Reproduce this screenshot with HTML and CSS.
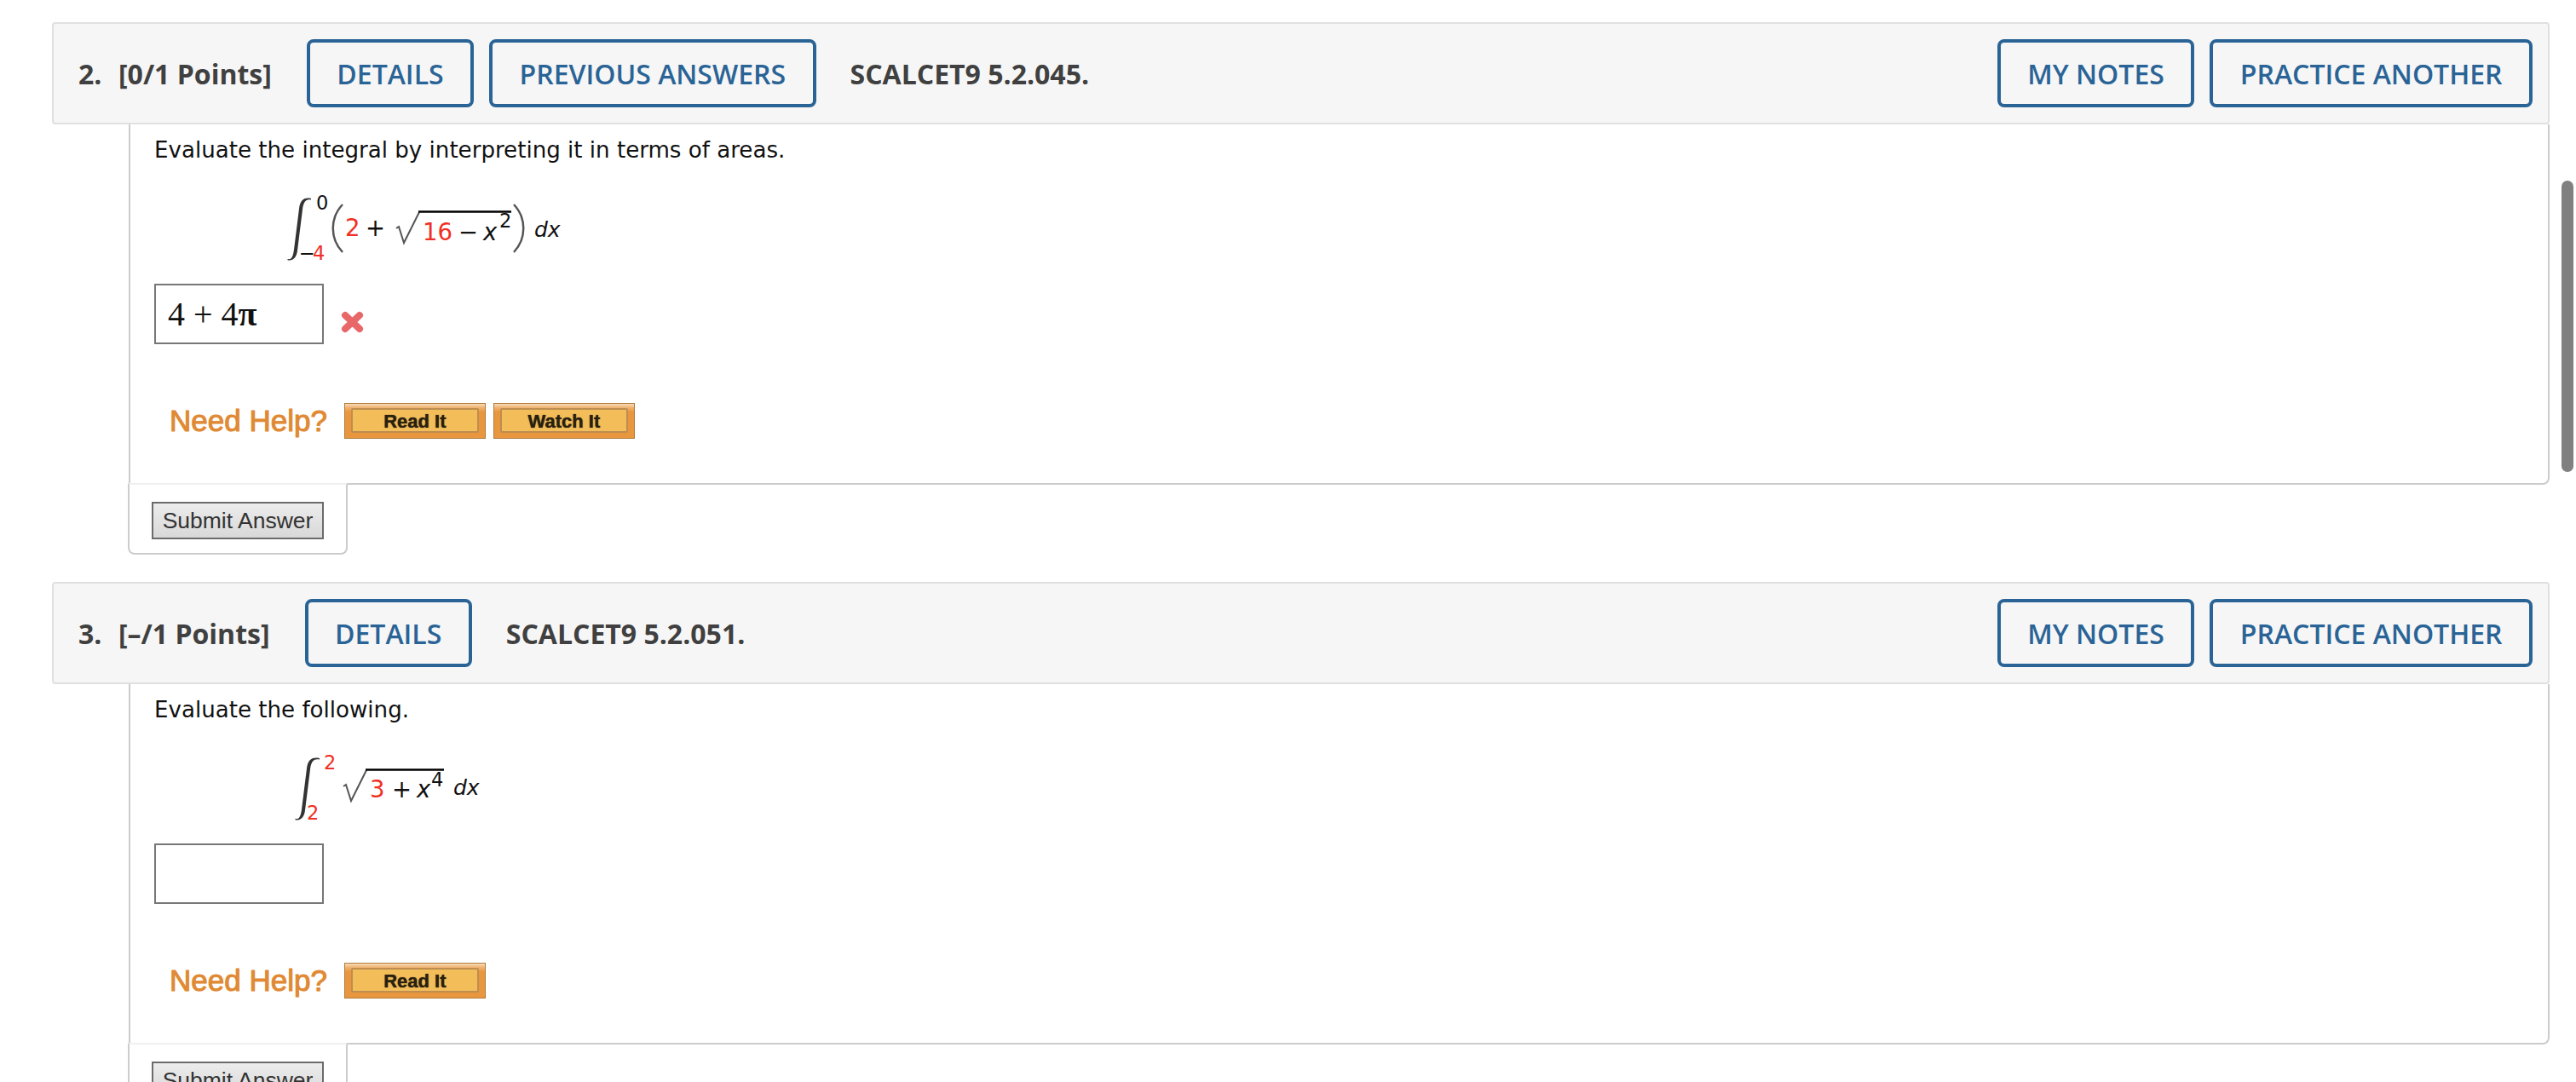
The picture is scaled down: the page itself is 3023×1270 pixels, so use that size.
FILE: index.html
```html
<!DOCTYPE html>
<html lang="en">
<head>
    <meta charset="UTF-8">
    <meta name="viewport" content="width=device-width, initial-scale=1.0">
    <title>Assignment</title>
    <link rel="stylesheet" href="styles.css">
</head>

<body>
<div class="scrollThumb"></div>

<section class="question">
    <div class="qHeader">
        <span class="qNum">2.</span>
        <span class="qPoints">[0/1 Points]</span>
        <a href="#" class="qBtn qBtnFirst">DETAILS</a>
        <a href="#" class="qBtn">PREVIOUS ANSWERS</a>
        <span class="qRef">SCALCET9 5.2.045.</span>
        <a href="#" class="qBtn qBtnRight">MY NOTES</a>
        <a href="#" class="qBtn">PRACTICE ANOTHER</a>
    </div>
    <div class="qBody">
        <p class="qText">Evaluate the integral by interpreting it in terms of areas.</p>
        <svg class="formula" viewBox="181 225 500 90" width="500" height="90">
            <path class="integral" d="M338 304 C342 305 344 301 345 293 L351 245 C352 236 356 231 365 233 L365 234.5 C359 233 356 237 355 246 L349 294 C348 303 343 307 337 305 Z"/>
            <text class="lim" x="371" y="246">0</text>
            <text class="lim" x="351" y="305">&#8722;</text>
            <text class="lim limBig red" x="367" y="305">4</text>
            <path class="paren" d="M402 240 C387 256 387 280 402 296"/>
            <text class="red" x="405" y="277">2</text>
            <text x="429" y="277">+</text>
            <path class="radical" d="M465 268 L468 266 L474 285 L492 249"/>
            <path class="radBar" d="M491 248.5 L600 248.5"/>
            <text class="red" x="496" y="282">16</text>
            <text x="538" y="282">&#8722;</text>
            <text class="var" x="567" y="282">x</text>
            <text class="lim" x="586" y="267">2</text>
            <path class="paren" d="M603 240 C618 256 618 280 603 296"/>
            <text class="var dx" x="627" y="278">dx</text>
        </svg>
        <div class="answerRow">
            <div class="answerBox">4 + 4<b>&#960;</b></div>
            <svg class="wrongMark" viewBox="0 0 27 26" width="27" height="26">
                <path d="M5 5 L22 21 M22 5 L5 21"/>
            </svg>
        </div>
        <div class="helpRow">
            <span class="helpLabel">Need Help?</span>
            <a href="#" class="helpBtn"><span>Read It</span></a>
            <a href="#" class="helpBtn"><span>Watch It</span></a>
        </div>
    </div>
    <div class="submitTab">
        <button class="submitBtn">Submit Answer</button>
    </div>
</section>

<section class="question">
    <div class="qHeader">
        <span class="qNum">3.</span>
        <span class="qPoints">[&#8211;/1 Points]</span>
        <a href="#" class="qBtn qBtnFirst">DETAILS</a>
        <span class="qRef">SCALCET9 5.2.051.</span>
        <a href="#" class="qBtn qBtnRight">MY NOTES</a>
        <a href="#" class="qBtn">PRACTICE ANOTHER</a>
    </div>
    <div class="qBody">
        <p class="qText">Evaluate the following.</p>
        <svg class="formula" viewBox="181 882 500 90" width="500" height="90">
            <path class="integral" transform="translate(9 657)" d="M338 304 C342 305 344 301 345 293 L351 245 C352 236 356 231 366 233 L366 234.5 C359 233 356 237 355 246 L349 294 C348 303 343 307 337 305 Z"/>
            <text class="lim red" x="380" y="903">2</text>
            <text class="lim red" x="360" y="962">2</text>
            <path class="radical" d="M403 923 L406 921 L412 940 L430 904"/>
            <path class="radBar" d="M429 903.5 L521 903.5"/>
            <text class="red" x="434" y="936">3</text>
            <text x="460" y="936">+</text>
            <text class="var" x="489" y="936">x</text>
            <text class="lim" x="506" y="923">4</text>
            <text class="var dx" x="532" y="933">dx</text>
        </svg>
        <div class="answerRow">
            <div class="answerBox"></div>
        </div>
        <div class="helpRow">
            <span class="helpLabel">Need Help?</span>
            <a href="#" class="helpBtn"><span>Read It</span></a>
        </div>
    </div>
    <div class="submitTab">
        <button class="submitBtn">Submit Answer</button>
    </div>
</section>
</body>
</html>
```

FILE: styles.css
```css
* {
    box-sizing: border-box;
}

html, body {
    height: 1270px;
    overflow: hidden;
}

body {
    margin: 0;
    padding: 26px 31px 0 61px;
    background: #fff;
    font-family: 'Open Sans', sans-serif;
}

.scrollThumb {
    position: absolute;
    top: 212px;
    right: 3px;
    width: 14px;
    height: 342px;
    background: #808080;
    border-radius: 7px;
}

.question {
    margin-bottom: 32px;
}

.qHeader {
    display: flex;
    align-items: center;
    height: 120px;
    padding: 0 18px 0 29px;
    background: #f6f6f6;
    border: 2px solid #e0e0e0;
    border-radius: 4px;
    color: #404040;
    font-size: 32px;
    font-weight: 700;
}

.qNum {
    width: 47px;
}

.qBtn {
    display: flex;
    align-items: center;
    height: 80px;
    padding: 0 31.5px;
    margin-left: 18px;
    border: 4px solid #2a6496;
    border-radius: 8px;
    color: #2a6496;
    font-size: 32px;
    font-weight: 600;
    text-decoration: none;
}

.qBtnFirst {
    margin-left: 41px;
}

.qBtnRight {
    margin-left: auto;
}

.qRef {
    margin-left: 40px;
}

.qBody {
    margin-left: 90px;
    padding: 12px 0 52px 28px;
    background: #fff;
    border: 2px solid #ccc;
    border-top: none;
    border-bottom-right-radius: 8px;
}

.qText {
    margin: 0;
    font-family: 'DejaVu Sans', sans-serif;
    font-size: 26.1px;
    line-height: 36px;
    color: #111;
}

.formula {
    display: block;
    margin-top: 31px;
    font-family: 'DejaVu Sans', sans-serif;
    font-size: 27.5px;
    fill: #111;
}

.formula .red {
    fill: #f03024;
}

.formula .lim {
    font-size: 22.5px;
}

.formula .var {
    font-style: italic;
}

.formula .dx {
    font-size: 25px;
}

.integral {
    fill: #333;
}

.paren {
    fill: none;
    stroke: #555;
    stroke-width: 2.5;
}

.radical {
    fill: none;
    stroke: #555;
    stroke-width: 2;
}

.radBar {
    fill: none;
    stroke: #000;
    stroke-width: 2.5;
}

.answerRow {
    display: flex;
    align-items: flex-end;
    gap: 20px;
    margin-top: 18px;
}

.answerBox {
    width: 199px;
    height: 71px;
    padding-left: 14px;
    border: 2px solid #777;
    font-family: 'Liberation Serif', serif;
    font-size: 40px;
    line-height: 68px;
    color: #111;
}

.wrongMark {
    margin-bottom: 13px;
}

.wrongMark path {
    fill: none;
    stroke: #e8686a;
    stroke-width: 8;
    stroke-linecap: round;
}

.helpRow {
    display: flex;
    align-items: center;
    gap: 9px;
    height: 42px;
    margin-top: 69px;
    padding-left: 18px;
}

.helpLabel {
    margin-right: 11px;
    font-family: 'Liberation Sans', sans-serif;
    font-size: 35px;
    color: #e08a35;
    -webkit-text-stroke: 0.9px #e08a35;
    text-shadow: 0 0 1px #e8a060;
}

.helpBtn {
    display: block;
    width: 166px;
    height: 42px;
    padding: 5px 7px 6px;
    background: linear-gradient(#f7dcbb, #efb06c 12%, #e9973f 24%);
    border: 1.5px solid #b07a3a;
    text-decoration: none;
}

.helpBtn span {
    display: flex;
    justify-content: center;
    align-items: center;
    height: 100%;
    padding-top: 2px;
    background: #f3bd5a;
    border: 2px solid #bd8e50;
    border-radius: 2px;
    font-family: 'Liberation Sans', sans-serif;
    font-size: 22px;
    font-weight: 700;
    color: #2a2010;
    text-shadow: 0 0 1px #2a2010;
}

.submitTab {
    position: relative;
    width: 258px;
    margin: -2px 0 0 89px;
    padding: 20px 0 16px 26px;
    background: #fff;
    border: 2px solid #ccc;
    border-top-color: #f0f0f0;
    border-bottom-left-radius: 8px;
    border-bottom-right-radius: 8px;
}

.submitBtn {
    display: block;
    width: 202px;
    height: 44px;
    padding: 0;
    background: linear-gradient(#ececec, #d8d8d8);
    border: 2px solid #6b6b6b;
    font-family: 'Liberation Sans', sans-serif;
    font-size: 26.5px;
    color: #333;
}
```
